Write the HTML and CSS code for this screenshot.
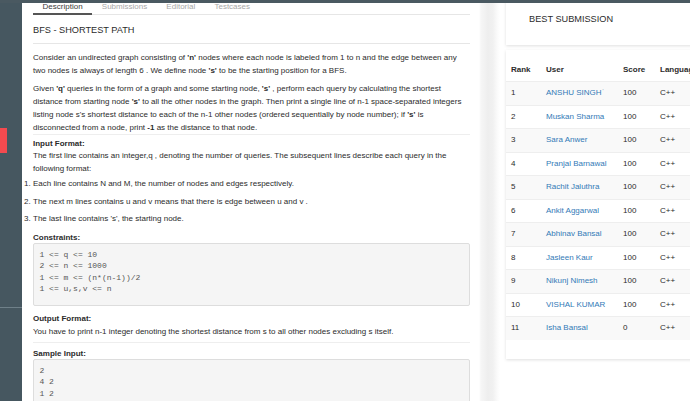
FILE: index.html
```html
<!DOCTYPE html>
<html>
<head>
<meta charset="utf-8">
<title>BFS - Shortest Path</title>
<link rel="stylesheet" href="styles.css">
</head>
<body>
<div class="topbar"></div>
<aside class="sidebar">
  <div class="sidebar-active"></div>
  <div class="sidebar-rule"></div>
</aside>
<main class="problem">
  <ul class="tabs">
    <li class="tab active">Description</li>
    <li class="tab">Submissions</li>
    <li class="tab">Editorial</li>
    <li class="tab">Testcases</li>
  </ul>
  <h2 class="title">BFS - SHORTEST PATH</h2>
  <p class="p-intro">Consider an undirected graph consisting of <b>'n'</b> nodes where each node is labeled from 1 to n and the edge between any two nodes is always of length 6 . We define node <b>'s'</b> to be the starting position for a BFS.</p>
  <p class="p-given">Given <b>'q'</b> queries in the form of a graph and some starting node, <b>'s'</b> , perform each query by calculating the shortest distance from starting node <b>'s'</b> to all the other nodes in the graph. Then print a single line of n-1 space-separated integers listing node s's shortest distance to each of the n-1 other nodes (ordered sequentially by node number); if <b>'s'</b> is disconnected from a node, print <b>-1</b> as the distance to that node.</p>
  <hr class="rule rule-a">
  <div class="label label-input">Input Format:</div>
  <p class="text">The first line contains an integer,q , denoting the number of queries. The subsequent lines describe each query in the following format:</p>
  <ol class="steps">
    <li>Each line contains N and M, the number of nodes and edges respectively.</li>
    <li>The next m lines contains u and v means that there is edge between u and v .</li>
    <li>The last line contains 's', the starting node.</li>
  </ol>
  <div class="label label-constraints">Constraints:</div>
  <pre class="code code-constraints">1 &lt;= q &lt;= 10
2 &lt;= n &lt;= 1000
1 &lt;= m &lt;= (n*(n-1))/2
1 &lt;= u,s,v &lt;= n</pre>
  <div class="label label-output">Output Format:</div>
  <p class="text text-output">You have to print n-1 integer denoting the shortest distance from s to all other nodes excluding s itself.</p>
  <hr class="rule rule-b">
  <div class="label label-sample">Sample Input:</div>
  <pre class="code code-sample">2
4 2
1 2
1 3
1
3 1
2 3
2</pre>
</main>
<div class="shade"></div>
<section class="side">
  <div class="card best">BEST SUBMISSION</div>
  <div class="card board">
    <table class="ranks">
      <colgroup><col class="c-rank"><col class="c-user"><col class="c-score"><col class="c-lang"></colgroup>
      <thead>
        <tr><th>Rank</th><th>User</th><th>Score</th><th>Language</th></tr>
      </thead>
      <tbody>
        <tr><td>1</td><td><a href="#">ANSHU SINGH</a><sup class="mark">'</sup></td><td>100</td><td>C++</td></tr>
        <tr><td>2</td><td><a href="#">Muskan Sharma</a></td><td>100</td><td>C++</td></tr>
        <tr><td>3</td><td><a href="#">Sara Anwer</a></td><td>100</td><td>C++</td></tr>
        <tr><td>4</td><td><a href="#">Pranjal Barnawal</a></td><td>100</td><td>C++</td></tr>
        <tr><td>5</td><td><a href="#">Rachit Jaluthra</a></td><td>100</td><td>C++</td></tr>
        <tr><td>6</td><td><a href="#">Ankit Aggarwal</a></td><td>100</td><td>C++</td></tr>
        <tr><td>7</td><td><a href="#">Abhinav Bansal</a></td><td>100</td><td>C++</td></tr>
        <tr><td>8</td><td><a href="#">Jasleen Kaur</a></td><td>100</td><td>C++</td></tr>
        <tr><td>9</td><td><a href="#">Nikunj Nimesh</a></td><td>100</td><td>C++</td></tr>
        <tr><td>10</td><td><a href="#">VISHAL KUMAR</a></td><td>100</td><td>C++</td></tr>
        <tr><td>11</td><td><a href="#">Isha Bansal</a></td><td>0</td><td>C++</td></tr>
      </tbody>
    </table>
  </div>
</section>
</body>
</html>
```
FILE: styles.css
```css
* { box-sizing: border-box; }
html, body { margin: 0; padding: 0; }
body {
  display: flex;
  width: 690px;
  height: 401px;
  overflow: hidden;
  font-family: "Liberation Sans", Arial, sans-serif;
  font-size: 8px;
  line-height: 13px;
  color: #2b2b2b;
  background: #fff;
}
.topbar {
  position: fixed;
  top: 0; left: 0; right: 0;
  height: 3px;
  background: #4a5961;
  z-index: 5;
}
.sidebar {
  flex: 0 0 22px;
  background: #465760;
  display: flex;
  flex-direction: column;
}
.sidebar-active { margin-top: 128px; width: 7px; height: 25px; background: #f44a4f; }
.sidebar-rule { margin-top: 154px; height: 1px; background: #6f8089; }

.problem {
  flex: 0 0 457px;
  padding: 0 9px 0 11px;
  background: #fff;
  position: relative;
  z-index: 1;
}
.tabs {
  display: flex;
  margin: 0;
  padding: 0;
  list-style: none;
  height: 15px;
  border-bottom: 1px solid #e6e6e6;
}
.tab {
  padding: 2px 9.6px 1px;
  line-height: 10px;
  color: #a8a8a8;
  margin-bottom: -1px;
}
.tab.active { color: #3a3a3a; border-bottom: 2px solid #555; }
.title {
  margin: 0;
  padding: 8.5px 0 6.5px;
  font-size: 9.2px;
  font-weight: normal;
  line-height: 13px;
  color: #2b2b2b;
  border-bottom: 1px solid #e6e6e6;
}
.p-intro { margin: 7px 0 0; }
.p-given { margin: 5px 0 0; }
.rule { margin: 0; border: 0; border-top: 1px solid #eee; }
.rule-b { margin-top: 4px; }
.label { font-weight: bold; line-height: 11px; color: #2b2b2b; }
.label-input { margin-top: 3px; }
.label-constraints { margin-top: 6.5px; }
.label-output { margin-top: 7px; }
.label-sample { margin-top: 5px; }
.text { margin: 0; }
.text-output { margin-top: 1px; }
.steps { margin: 2px 0 0; padding: 0; }
.steps li + li { margin-top: 4.5px; }
.code {
  margin: 0;
  padding: 5px 5.5px 10px;
  border: 1px solid #ddd;
  border-radius: 2px;
  background: #f5f5f5;
  font-family: "Liberation Mono", "Courier New", monospace;
  font-size: 8px;
  line-height: 11.5px;
  color: #555;
}

.shade {
  flex: 0 0 27px;
  background: linear-gradient(to right, #fff 0, #f6f6f6 2px, #eeeeee 9px, #f1f1f1 14px, #fafafa 18px, #fff 21px);
}
.side { flex: 0 0 240px; }
.card { background: #fff; box-shadow: 0 1px 3px rgba(0,0,0,0.13); }
.best {
  height: 45px;
  padding: 13px 0 0 23px;
  font-size: 9.2px;
  line-height: 13px;
  color: #2b2b2b;
}
.board { margin-top: 5px; padding: 7.5px 0 19px; }
.ranks {
  width: 100%;
  table-layout: fixed;
  border-collapse: separate;
  border-spacing: 0;
}
.c-rank { width: 35px; }
.c-user { width: 77px; }
.c-score { width: 37px; }
.ranks th {
  text-align: left;
  font-weight: bold;
  padding: 6px 5px 5.5px;
  line-height: 12px;
  white-space: nowrap;
}
.ranks td {
  padding: 5px 5px 5.5px;
  line-height: 12px;
  border-top: 1px solid #eee;
  white-space: nowrap;
}
.ranks tbody tr:nth-child(odd) td { background: #f9f9f9; }
.ranks a { color: #337ab7; text-decoration: none; }
.mark { font-size: 5px; color: #7a9bb8; vertical-align: top; line-height: 8px; margin-left: 1px; }
```
